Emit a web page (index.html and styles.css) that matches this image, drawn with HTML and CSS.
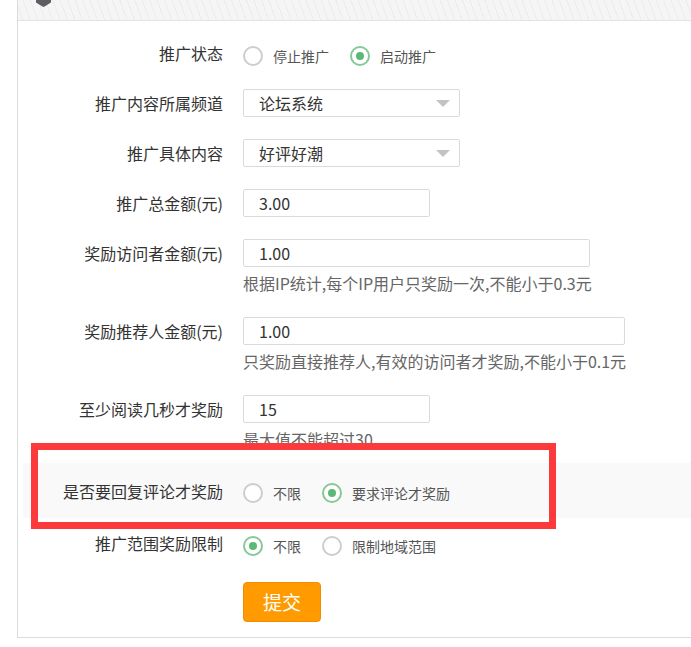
FILE: index.html
```html
<!DOCTYPE html>
<html lang="zh-CN">
<head>
<meta charset="utf-8">
<title>推广设置</title>
<link rel="stylesheet" href="styles.css">
</head>
<body>
<div class="page">
  <div class="panel">
    <div class="panel-head">
      <svg class="head-icon" width="15" height="7" viewBox="0 0 15 7"><path d="M0 0H15V2.6L8.6 6.5Q7.5 7.2 6.4 6.5L0 2.6Z" fill="#5d5c62"/></svg>
    </div>
    <form class="form">
      <div class="row">
        <div class="label">推广状态</div>
        <div class="radios">
          <span class="radio"><i class="dot"></i>停止推广</span>
          <span class="radio on"><i class="dot"></i>启动推广</span>
        </div>
      </div>
      <div class="row">
        <div class="label">推广内容所属频道</div>
        <div class="field">
          <div class="select w217"><span>论坛系统</span><i class="caret"></i></div>
        </div>
      </div>
      <div class="row">
        <div class="label">推广具体内容</div>
        <div class="field">
          <div class="select w217"><span>好评好潮</span><i class="caret"></i></div>
        </div>
      </div>
      <div class="row">
        <div class="label">推广总金额(元)</div>
        <div class="field">
          <div class="input w187">3.00</div>
        </div>
      </div>
      <div class="row">
        <div class="label">奖励访问者金额(元)</div>
        <div class="field">
          <div class="input w347">1.00</div>
          <div class="hint">根据IP统计,每个IP用户只奖励一次,不能小于0.3元</div>
        </div>
      </div>
      <div class="row">
        <div class="label">奖励推荐人金额(元)</div>
        <div class="field">
          <div class="input w382">1.00</div>
          <div class="hint">只奖励直接推荐人,有效的访问者才奖励,不能小于0.1元</div>
        </div>
      </div>
      <div class="row row-tight">
        <div class="label">至少阅读几秒才奖励</div>
        <div class="field">
          <div class="input w187">15</div>
          <div class="hint">最大值不能超过30</div>
        </div>
      </div>
      <div class="row band">
        <div class="label">是否要回复评论才奖励</div>
        <div class="radios">
          <span class="radio"><i class="dot"></i>不限</span>
          <span class="radio on"><i class="dot"></i>要求评论才奖励</span>
        </div>
        <div class="mark"></div>
      </div>
      <div class="row row-before-btn">
        <div class="label">推广范围奖励限制</div>
        <div class="radios">
          <span class="radio on"><i class="dot"></i>不限</span>
          <span class="radio"><i class="dot"></i>限制地域范围</span>
        </div>
      </div>
      <div class="actions">
        <button type="button" class="btn">提交</button>
      </div>
    </form>
  </div>
</div>
</body>
</html>
```

FILE: styles.css
```css
* { box-sizing: border-box; }

html, body {
  margin: 0;
  background: #fff;
  font-family: "Noto Sans CJK SC", "Microsoft YaHei", sans-serif;
  color: #333;
  overflow: hidden;
}

.page {
  padding-left: 17px;
}

.panel {
  border-left: 1px solid #dcdcdc;
  border-bottom: 1px solid #dcdcdc;
  background: #fff;
}

.panel-head {
  height: 21px;
  display: flex;
  align-items: flex-start;
  padding-left: 18px;
  border-bottom: 1px solid #e3e2e3;
  background-color: #f6f5f6;
  background-image: repeating-linear-gradient(70deg, #f6f5f6 0 4px, #ecebed 4px 5px, #f6f5f6 5px 7px);
}

.head-icon {
  display: block;
}

.form {
  margin: 0;
  padding: 18px 0 15px;
}

.row {
  display: flex;
  align-items: flex-start;
  margin-bottom: 22px;
}

.row-tight {
  margin-bottom: 12px;
}

.row-before-btn {
  margin-bottom: 25px;
}

.label {
  width: 205px;
  flex-shrink: 0;
  margin-right: 20px;
  text-align: right;
  font-size: 16px;
  line-height: 28px;
  color: #333;
  white-space: nowrap;
}

.field {
  display: flex;
  flex-direction: column;
  align-items: flex-start;
}

.input,
.select {
  height: 28px;
  border: 1px solid #dadada;
  border-radius: 2px;
  background: #fff;
  font-size: 16px;
  line-height: 26px;
  color: #333;
  padding-left: 15px;
}

.select {
  display: flex;
  align-items: center;
  justify-content: space-between;
  padding-right: 9px;
}

.caret {
  width: 0;
  height: 0;
  border-left: 7px solid transparent;
  border-right: 7px solid transparent;
  border-top: 7px solid #c3c3c3;
}

.w187 { width: 187px; }
.w217 { width: 217px; }
.w347 { width: 347px; }
.w382 { width: 382px; }

.hint {
  margin-top: 4px;
  font-size: 16px;
  line-height: 24px;
  color: #666;
  white-space: nowrap;
}

.radios {
  display: flex;
  align-items: center;
  height: 28px;
  margin-top: 3px;
  margin-bottom: -3px;
  font-size: 14px;
  color: #555;
}

.radio {
  display: inline-flex;
  align-items: center;
  margin-right: 21px;
  white-space: nowrap;
}

.dot {
  position: relative;
  width: 20px;
  height: 20px;
  margin-right: 10px;
  border: 2px solid #cdcdcd;
  border-radius: 50%;
  background: #fff;
}

.radio.on .dot {
  border-color: #86c995;
}

.radio.on .dot::after {
  content: "";
  position: absolute;
  left: 4px;
  top: 4px;
  width: 8px;
  height: 8px;
  border-radius: 50%;
  background: #5cb877;
}

.band {
  position: relative;
  margin-left: 5px;
  margin-bottom: 11px;
  padding: 14px 0 13px;
  background: #f9f9f9;
}

.band .label {
  width: 200px;
}

.band .radios {
  margin-top: 2px;
  margin-bottom: -2px;
}

.mark {
  position: absolute;
  left: 8px;
  top: -20px;
  width: 525px;
  height: 86px;
  border: 7px solid #fc3a3c;
  pointer-events: none;
}

.actions {
  padding-left: 225px;
}

.btn {
  display: block;
  width: 78px;
  height: 40px;
  padding: 0;
  border: 1px solid #f58a00;
  border-radius: 4px;
  background: #ff9a00;
  color: #fff;
  font-family: "Noto Sans CJK SC", "Microsoft YaHei", sans-serif;
  font-size: 19px;
  line-height: 38px;
  cursor: pointer;
}
```
